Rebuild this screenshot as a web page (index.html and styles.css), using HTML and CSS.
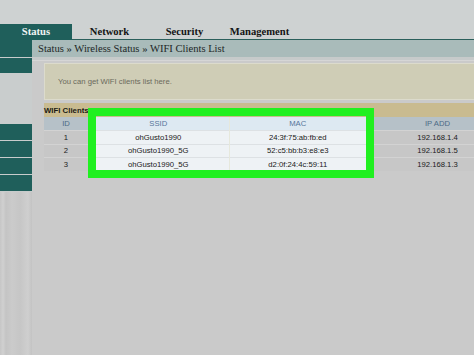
FILE: index.html
```html
<!DOCTYPE html>
<html>
<head>
<meta charset="utf-8">
<link rel="stylesheet" href="styles.css">
</head>
<body>
<div class="page">
  <div class="top"></div>
  <div class="nav">
    <div class="tab active">Status</div>
    <div class="tab">Network</div>
    <div class="tab">Security</div>
    <div class="tab">Management</div>
  </div>
  <div class="main">
    <div class="side">
      <div class="side-a"></div>
      <div class="side-b"></div>
      <div class="side-gap"></div>
      <div class="side-item"></div>
      <div class="side-item"></div>
      <div class="side-item"></div>
      <div class="side-item"></div>
      <div class="side-rest"></div>
    </div>
    <div class="content">
      <div class="crumb">Status &raquo; Wireless Status &raquo; WIFI Clients List</div>
      <div class="sep"></div>
      <div class="info">You can get WIFI clients list here.</div>
      <div class="list-title">WIFI Clients List</div>
      <table class="clients">
        <colgroup>
          <col class="c-id"><col class="c-ssid"><col class="c-mac"><col class="c-ip">
        </colgroup>
        <thead>
          <tr><th>ID</th><th class="hl">SSID</th><th class="hl">MAC</th><th>IP ADD</th></tr>
        </thead>
        <tbody>
          <tr><td>1</td><td class="hl">ohGusto1990</td><td class="hl">24:3f:75:ab:fb:ed</td><td>192.168.1.4</td></tr>
          <tr><td>2</td><td class="hl">ohGusto1990_5G</td><td class="hl">52:c5:bb:b3:e8:e3</td><td>192.168.1.5</td></tr>
          <tr><td>3</td><td class="hl">ohGusto1990_5G</td><td class="hl">d2:0f:24:4c:59:11</td><td>192.168.1.3</td></tr>
        </tbody>
      </table>
    </div>
  </div>
  <div class="highlight"></div>
</div>
</body>
</html>
```
FILE: styles.css
```css
html, body {
  margin: 0;
  padding: 0;
}
body {
  background: #cacaca;
  overflow: hidden;
}
.page {
  position: relative;
  width: 474px;
  height: 355px;
  overflow: hidden;
  background: #cacaca;
}
.top {
  height: 24px;
  background: #ced2d2;
}
.nav {
  display: flex;
  height: 15px;
  background: #ced2d2;
  border-bottom: 1px solid #2b5f5b;
  font-family: "Liberation Serif", serif;
  font-weight: bold;
  font-size: 10.6px;
  color: #151515;
}
.tab {
  width: 75px;
  text-align: center;
  line-height: 16px;
}
.tab.active {
  width: 72px;
  height: 16px;
  background: #1f5f5b;
  color: #f2f5f5;
}
.main {
  display: flex;
  height: 315px;
}
.side {
  width: 32px;
  display: flex;
  flex-direction: column;
  background: #c8cccc;
}
.side-a {
  height: 17px;
  background: #1f5f5b;
}
.side-b {
  height: 15px;
  margin-top: 1px;
  background: #1f5f5b;
}
.side-gap {
  height: 51px;
  background: #c9cdcd;
}
.side-item {
  height: 16px;
  margin-bottom: 1px;
  background: #1f5f5b;
}
.side-rest {
  flex: 1;
  background: linear-gradient(90deg, #c6c6c6 0px, #d0d0d0 3px, #c4c4c4 6px, #cbcbcb 12px, #c6c6c6 20px, #cfcfcf 28px, #c3c3c3 32px);
}
.content {
  flex: 1;
  min-width: 0;
}
.crumb {
  height: 17px;
  line-height: 17px;
  background: #a9bbba;
  padding-left: 6px;
  font-family: "Liberation Serif", serif;
  font-size: 10.6px;
  color: #1c2727;
  white-space: nowrap;
}
.sep {
  height: 6px;
  background: linear-gradient(#c6caca 0, #c6caca 3px, #d6d6d6 3px, #d6d6d6 4px, #cacaca 4px);
}
.info {
  margin-left: 12px;
  height: 35px;
  line-height: 36px;
  background: #cfcdb6;
  border: 1px solid #dcdbcc;
  border-right: none;
  padding-left: 13px;
  font-family: "Liberation Sans", Arial, sans-serif;
  font-size: 7.7px;
  color: #6a6a5c;
  white-space: nowrap;
}
.list-title {
  margin-top: 3px;
  margin-left: 12px;
  height: 14px;
  line-height: 15px;
  background: #c9bb90;
  font-family: "Liberation Sans", Arial, sans-serif;
  font-weight: bold;
  font-size: 7.8px;
  color: #1a1a14;
  white-space: nowrap;
}
.clients {
  margin-left: 12px;
  border-collapse: collapse;
  table-layout: fixed;
  width: 465px;
  font-family: "Liberation Sans", Arial, sans-serif;
  font-size: 7.7px;
  color: #202020;
}
.c-id { width: 44px; }
.c-ssid { width: 141px; }
.c-mac { width: 137px; }
.c-ip { width: 143px; }
.clients th {
  height: 13px;
  padding: 0;
  font-weight: normal;
  color: #4c6a86;
  background: #b6c1c8;
  text-align: center;
}
.clients th.hl {
  background: #dde9f2;
  color: #56759a;
}
.clients td {
  height: 12.5px;
  padding: 0;
  text-align: center;
  background: #c7c7c7;
  border-top: 1px solid #d3d3d3;
}
.clients td.hl {
  background: #eef2f5;
  border-top: 1px solid #dde1e4;
}
.clients td.hl + td.hl,
.clients th.hl + th.hl {
  border-left: 1px solid #e6e8dc;
}
.highlight {
  position: absolute;
  left: 88px;
  top: 108px;
  width: 286px;
  height: 70px;
  box-sizing: border-box;
  border: 8px solid #20f020;
}
```
